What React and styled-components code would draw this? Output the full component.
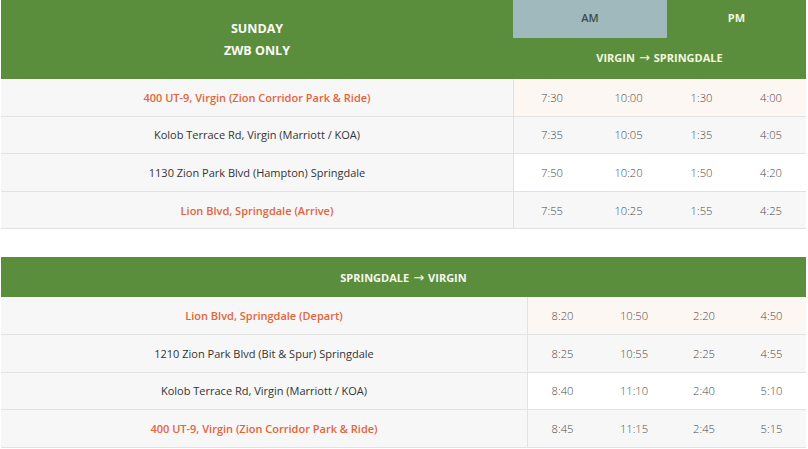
import React from "react";
import styled, { createGlobalStyle } from "styled-components";

const GREEN = "#5b8e3c";
const ORANGE = "#e4643a";
const LINE = "#e2e2e2";

const OUT_COLS = "512px 77px 77px 69px 1fr";
const IN_COLS = "526px 70px 74px 66px 1fr";

const outbound = [
  { stop: "400 UT-9, Virgin (Zion Corridor Park & Ride)", key: true, times: ["7:30", "10:00", "1:30", "4:00"] },
  { stop: "Kolob Terrace Rd, Virgin (Marriott / KOA)", times: ["7:35", "10:05", "1:35", "4:05"] },
  { stop: "1130 Zion Park Blvd (Hampton) Springdale", times: ["7:50", "10:20", "1:50", "4:20"] },
  { stop: "Lion Blvd, Springdale (Arrive)", key: true, times: ["7:55", "10:25", "1:55", "4:25"] },
];

const inbound = [
  { stop: "Lion Blvd, Springdale (Depart)", key: true, times: ["8:20", "10:50", "2:20", "4:50"] },
  { stop: "1210 Zion Park Blvd (Bit & Spur) Springdale", times: ["8:25", "10:55", "2:25", "4:55"] },
  { stop: "Kolob Terrace Rd, Virgin (Marriott / KOA)", times: ["8:40", "11:10", "2:40", "5:10"] },
  { stop: "400 UT-9, Virgin (Zion Corridor Park & Ride)", key: true, times: ["8:45", "11:15", "2:45", "5:15"] },
];

const tones = ["#fdf7f3", "#f7f7f7", "#ffffff", "#f7f7f7"];

export default function App() {
  return (
    <>
      <Global />
      <Page>
        <Table>
          <Head $cols={OUT_COLS}>
            <Title>
              <span>SUNDAY</span>
              <span>ZWB ONLY</span>
            </Title>
            <Period $am>AM</Period>
            <Period>PM</Period>
            <Direction>
              <span>VIRGIN</span>
              <Arrow>→</Arrow>
              <span>SPRINGDALE</span>
            </Direction>
          </Head>
          {outbound.map((r, i) => (
            <StopRow key={i} row={r} tone={tones[i]} cols={OUT_COLS} />
          ))}
        </Table>

        <Spacer />

        <Table>
          <SectionHead>
            <span>SPRINGDALE</span>
            <Arrow>→</Arrow>
            <span>VIRGIN</span>
          </SectionHead>
          {inbound.map((r, i) => (
            <StopRow key={i} row={r} tone={tones[i]} cols={IN_COLS} />
          ))}
        </Table>
      </Page>
    </>
  );
}

function StopRow({ row, tone, cols }) {
  return (
    <Row $cols={cols}>
      <NameCell $key={row.key}>{row.stop}</NameCell>
      {row.times.map((t, j) => (
        <TimeCell key={j} $tone={tone} $divider={j === 0}>
          {t}
        </TimeCell>
      ))}
    </Row>
  );
}

const Global = createGlobalStyle`
  body {
    margin: 0;
    background: #fff;
    font-family: "Open Sans", "Liberation Sans", sans-serif;
  }
`;

const Page = styled.div`
  width: 808px;
  padding: 0 2px 0 1px;
  box-sizing: border-box;
`;

const Table = styled.div`
  display: flex;
  flex-direction: column;
`;

const Head = styled.div`
  display: grid;
  grid-template-columns: ${(p) => p.$cols};
  grid-template-rows: 38px 41px;
  background: ${GREEN};
`;

const Title = styled.div`
  grid-row: 1 / span 2;
  grid-column: 1;
  display: flex;
  flex-direction: column;
  align-items: center;
  justify-content: center;
  color: #fbfbf6;
  font-size: 12.5px;
  font-weight: 700;
  line-height: 22px;
`;

const Period = styled.div`
  grid-row: 1;
  grid-column: ${(p) => (p.$am ? "2 / span 2" : "4 / span 2")};
  display: flex;
  align-items: center;
  justify-content: center;
  padding-bottom: 3px;
  background: ${(p) => (p.$am ? "#a0b9bd" : "transparent")};
  color: ${(p) => (p.$am ? "#3e4b50" : "#f2f7de")};
  font-size: 11px;
  font-weight: ${(p) => (p.$am ? 600 : 700)};
`;

const Direction = styled.div`
  grid-row: 2;
  grid-column: 2 / span 4;
  display: flex;
  align-items: center;
  justify-content: center;
  padding-bottom: 2px;
  color: #f2f7de;
  font-size: 11px;
  font-weight: 700;
`;

const Arrow = styled.span`
  margin: 0 4px;
  font-family: "DejaVu Sans", sans-serif;
  font-weight: 400;
  font-size: 13px;
  line-height: 1;
`;

const SectionHead = styled.div`
  height: 40px;
  display: flex;
  align-items: center;
  justify-content: center;
  background: ${GREEN};
  color: #f6f8ee;
  font-size: 11px;
  font-weight: 700;
`;

const Row = styled.div`
  display: grid;
  grid-template-columns: ${(p) => p.$cols};
  height: 37.6px;
  box-sizing: border-box;
  border-bottom: 1px solid ${LINE};
`;

const NameCell = styled.div`
  display: flex;
  align-items: center;
  justify-content: center;
  background: #f7f7f7;
  color: ${(p) => (p.$key ? ORANGE : "#333")};
  font-size: 11px;
  font-weight: ${(p) => (p.$key ? 600 : 400)};
`;

const TimeCell = styled.div`
  display: flex;
  align-items: center;
  justify-content: center;
  background: ${(p) => p.$tone};
  border-left: ${(p) => (p.$divider ? `1px solid ${LINE}` : "none")};
  color: #4a4a4a;
  font-size: 11.2px;
  font-weight: 300;
`;

const Spacer = styled.div`
  height: 28px;
`;
